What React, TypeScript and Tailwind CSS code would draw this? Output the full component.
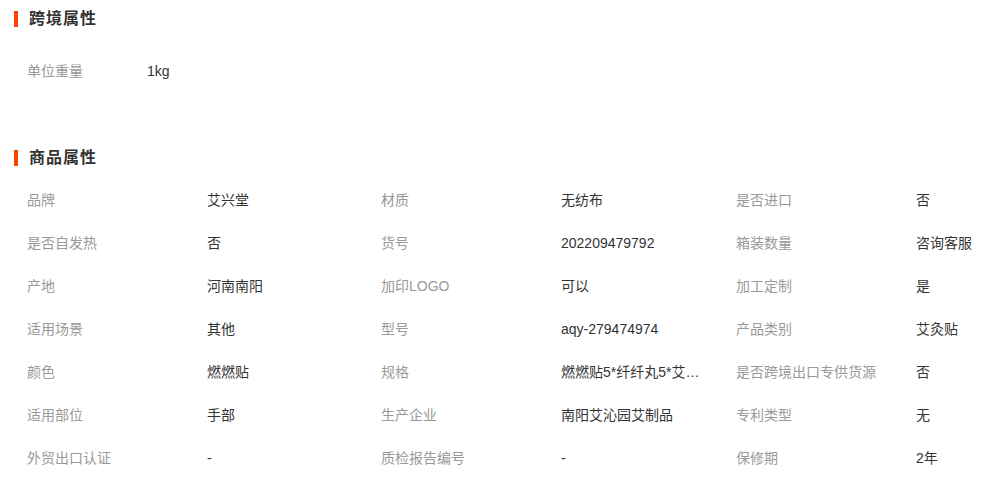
import React from "react";

const ROWS: [string, string, string, string, string, string][] = [
  ["品牌", "艾兴堂", "材质", "无纺布", "是否进口", "否"],
  ["是否自发热", "否", "货号", "202209479792", "箱装数量", "咨询客服"],
  ["产地", "河南南阳", "加印LOGO", "可以", "加工定制", "是"],
  ["适用场景", "其他", "型号", "aqy-279474974", "产品类别", "艾灸贴"],
  ["颜色", "燃燃贴", "规格", "燃燃贴5*纤纤丸5*艾灸贴10", "是否跨境出口专供货源", "否"],
  ["适用部位", "手部", "生产企业", "南阳艾沁园艾制品", "专利类型", "无"],
  ["外贸出口认证", "-", "质检报告编号", "-", "保修期", "2年"],
];

const Heading: React.FC<{ title: string }> = ({ title }) => (
  <div className="flex items-center h-5 pl-[14px]">
    <span className="w-1 h-4 bg-[#ff4400]"></span>
    <span className="ml-[11px] text-base font-bold text-[#333] tracking-[1px] leading-5">
      {title}
    </span>
  </div>
);

const App: React.FC = () => {
  return (
    <div
      className="w-[991px] h-[488px] overflow-hidden bg-white text-sm"
      style={{ fontFamily: '"Liberation Sans", "Noto Sans CJK SC", sans-serif' }}
    >
      {/* 跨境属性 */}
      <div className="pt-[9px]">
        <Heading title="跨境属性" />
        <div className="flex items-center h-[43px] mt-[20px] pl-[27px]">
          <span className="w-[120px] text-[#999]">单位重量</span>
          <span className="text-[#333]">1kg</span>
        </div>
      </div>

      {/* 商品属性 */}
      <div className="mt-[56px]">
        <Heading title="商品属性" />
        <div className="mt-[10px] pl-[27px]">
          {ROWS.map((row, i) => (
            <div key={i} className="flex items-center h-[43px] whitespace-nowrap">
              <span className="w-[180px] shrink-0 text-[#999]">{row[0]}</span>
              <span className="w-[174px] shrink-0 pr-[30px] truncate text-[#333]">{row[1]}</span>
              <span className="w-[180px] shrink-0 text-[#999]">{row[2]}</span>
              <span className="w-[175px] shrink-0 pr-[30px] truncate text-[#333]">{row[3]}</span>
              <span className="w-[180px] shrink-0 text-[#999]">{row[4]}</span>
              <span className="w-[174px] shrink-0 text-[#333]">{row[5]}</span>
            </div>
          ))}
        </div>
      </div>
    </div>
  );
};

export default App;
